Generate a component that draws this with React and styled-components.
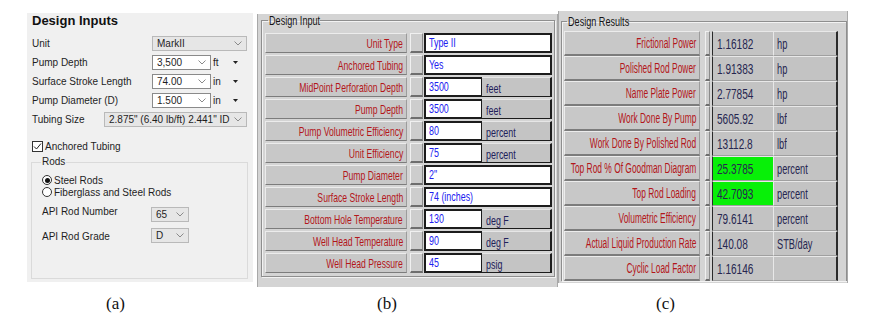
import styled, { createGlobalStyle } from 'styled-components';

const GlobalStyle = createGlobalStyle`
  html, body {
    margin: 0;
    padding: 0;
    background: #fff;
  }
  body {
    width: 871px;
    height: 320px;
    overflow: hidden;
  }
`;

const Page = styled.div`
  display: grid;
  grid-template-columns: 230px 301px 290px;
  grid-template-rows: 276px auto;
  align-items: start;
  padding: 11px 0 0 27px;
`;

const Caption = styled.div`
  margin: 8px 0 0 ${(p) => p.$offset}px;
  font-family: 'Liberation Serif', 'Times New Roman', serif;
  font-size: 17px;
  line-height: 18px;
  color: #111;
`;

/* the old grid panels use a condensed face; none is installed, so squeeze it */
const Narrow = styled.span`
  display: inline-block;
  flex-shrink: 0;
  white-space: nowrap;
  transform: scaleX(${(p) => p.$x});
  transform-origin: ${(p) => p.$origin || 'left'} center;
`;

/* ---------- (a) Design Inputs ---------- */

const InputsPanel = styled.section`
  margin-top: 2px;
  width: 226px;
  height: 269px;
  box-sizing: border-box;
  padding: 0 6px 0 5px;
  background: #f0f0f0;
  font-family: 'Liberation Sans', Arial, sans-serif;
  font-size: 10px;
  color: #1e1e1e;
`;

const PanelTitle = styled.h2`
  margin: 0;
  font-size: 13px;
  line-height: 16px;
  font-weight: bold;
  color: #111;
`;

const FormRow = styled.div`
  display: flex;
  align-items: center;
  height: 19px;
  &:first-of-type {
    margin-top: 5px;
  }
`;

const FieldLabel = styled.span`
  flex: 1;
  white-space: nowrap;
`;

const DropBox = styled.div`
  width: ${(p) => p.$w}px;
  height: 15px;
  box-sizing: border-box;
  display: flex;
  align-items: center;
  justify-content: space-between;
  padding: 0 4px 0 4px;
  background: ${(p) => (p.$flat ? '#e6e6e6' : '#fff')};
  border: 1px solid ${(p) => (p.$flat ? '#b9b9b9' : '#8a8a8a')};
  font-size: 10px;
  white-space: nowrap;
`;

const UnitPick = styled.div`
  width: 36px;
  display: flex;
  align-items: center;
  padding-left: 2px;
  box-sizing: border-box;
  & svg {
    margin: 0 9px 0 auto;
  }
`;

const CheckRow = styled.label`
  display: flex;
  align-items: center;
  gap: 2px;
  height: 19px;
  margin-top: 8px;
`;

const CheckBox = styled.span`
  width: 11px;
  height: 11px;
  box-sizing: border-box;
  border: 1px solid #333;
  background: #fff;
  display: flex;
  align-items: center;
  justify-content: center;
`;

const RodsGroup = styled.fieldset`
  margin: 0 -1px 0 -1px;
  padding: 0 0 0 10px;
  height: 123px;
  box-sizing: border-box;
  border: 1px solid #dadada;
`;

const RodsLegend = styled.legend`
  margin-left: -1px;
  padding: 0 1px;
  line-height: 12px;
`;

const RadioRow = styled.div`
  display: flex;
  align-items: center;
  gap: 2px;
  height: 12px;
  &:first-of-type {
    margin-top: 6px;
  }
`;

const Radio = styled.span`
  width: 10px;
  height: 10px;
  box-sizing: border-box;
  border-radius: 50%;
  border: 1px solid #333;
  background: #fff;
  display: flex;
  align-items: center;
  justify-content: center;
  &::after {
    content: '';
    width: 5px;
    height: 5px;
    border-radius: 50%;
    background: ${(p) => (p.$on ? '#111' : 'transparent')};
  }
`;

const RodRow = styled.div`
  display: flex;
  align-items: flex-start;
  height: 15px;
  margin-top: ${(p) => p.$gap}px;
`;

const RodLabel = styled.span`
  width: 109px;
  line-height: 10px;
  margin-top: ${(p) => p.$nudge}px;
`;

const Chevron = () => (
  <svg width="8" height="5" viewBox="0 0 8 5">
    <path d="M0.5 0.5 L4 4 L7.5 0.5" stroke="#8a8a8a" fill="none" />
  </svg>
);

const Caret = () => (
  <svg width="5" height="3" viewBox="0 0 5 3">
    <path d="M0 0 H5 L2.5 3 Z" fill="#222" />
  </svg>
);

const unitRows = [
  ['Pump Depth', '3,500', 'ft'],
  ['Surface Stroke Length', '74.00', 'in'],
  ['Pump Diameter (D)', '1.500', 'in'],
];

const DesignInputs = () => (
  <InputsPanel>
    <PanelTitle>Design Inputs</PanelTitle>
    <FormRow>
      <FieldLabel>Unit</FieldLabel>
      <DropBox $w={95} $flat>
        MarkII <Chevron />
      </DropBox>
    </FormRow>
    {unitRows.map(([label, value, unit]) => (
      <FormRow key={label}>
        <FieldLabel>{label}</FieldLabel>
        <DropBox $w={59}>
          {value} <Chevron />
        </DropBox>
        <UnitPick>
          {unit}
          <Caret />
        </UnitPick>
      </FormRow>
    ))}
    <FormRow>
      <FieldLabel>Tubing Size</FieldLabel>
      <DropBox $w={143} $flat>
        2.875" (6.40 lb/ft) 2.441" ID <Chevron />
      </DropBox>
    </FormRow>
    <CheckRow>
      <CheckBox>
        <svg width="9" height="9" viewBox="0 0 9 9">
          <path d="M1 4.5 L3.5 7 L8 1.5" stroke="#222" fill="none" />
        </svg>
      </CheckBox>
      Anchored Tubing
    </CheckRow>
    <RodsGroup>
      <RodsLegend>Rods</RodsLegend>
      <RadioRow>
        <Radio $on />
        Steel Rods
      </RadioRow>
      <RadioRow>
        <Radio />
        Fiberglass and Steel Rods
      </RadioRow>
      <RodRow $gap={9}>
        <RodLabel $nudge={0}>API Rod Number</RodLabel>
        <DropBox $w={38} $flat>
          65 <Chevron />
        </DropBox>
      </RodRow>
      <RodRow $gap={6}>
        <RodLabel $nudge={4}>API Rod Grade</RodLabel>
        <DropBox $w={38} $flat>
          D <Chevron />
        </DropBox>
      </RodRow>
    </RodsGroup>
  </InputsPanel>
);

/* ---------- (b), (c) legacy grid panels ---------- */

const LegacyPanel = styled.section`
  margin-top: ${(p) => p.$top}px;
  width: ${(p) => p.$w}px;
  height: ${(p) => p.$h}px;
  box-sizing: border-box;
  background: #d4d4d4;
  border-left: 1px solid #a8a8a8;
  border-right: 1px solid #a8a8a8;
  padding: ${(p) => p.$pad};
  font-family: 'Liberation Sans', Arial, sans-serif;
  overflow: hidden;
`;

const GroupFrame = styled.fieldset`
  margin: 0;
  padding: ${(p) => p.$pad};
  border: 1px solid #8e8e8e;
  border-bottom: ${(p) => (p.$open ? 'none' : '1px solid #8e8e8e')};
  box-shadow: inset 1px 1px 0 #f2f2f2, 1px 1px 0 #f2f2f2;
`;

const GroupLegend = styled.legend`
  margin-left: 3px;
  padding: 0 1px;
  width: ${(p) => p.$w}px;
  font-size: 13px;
  line-height: 13px;
  color: #141414;
  overflow: visible;
`;

const InputGrid = styled.div`
  display: grid;
  grid-template-columns: 142px 13px 128px;
  grid-auto-rows: 20px;
  column-gap: 2px;
  row-gap: 2px;
  margin-top: 6px;
  & > :nth-child(3n + 2) {
    margin-left: 1px;
    margin-right: -1px;
  }
`;

const LabelCell = styled.div`
  display: flex;
  align-items: center;
  justify-content: flex-end;
  padding-right: 3px;
  background: #c8c8c8;
  border-top: 1px solid #ececec;
  border-left: 1px solid #ececec;
  border-bottom: ${(p) => p.$bottom}px solid #7c7c7c;
  border-right: 1px solid #9c9c9c;
  color: #b3161a;
  font-size: ${(p) => p.$size}px;
`;

const StubButton = styled.div`
  background: #cdcdcd;
  border-top: 1px solid #f0f0f0;
  border-left: 1px solid #f0f0f0;
  border-bottom: 2px solid #6e6e6e;
  border-right: 1px solid #8a8a8a;
`;

const EntryBox = styled.div`
  display: flex;
  font-size: 13.5px;
`;

const EntryValue = styled.div`
  width: ${(p) => (p.$full ? '100%' : '58px')};
  box-sizing: border-box;
  padding: 0 0 0 3px;
  background: #fff;
  color: #2020f0;
  border: 2px solid #1c1c1c;
  border-right-width: ${(p) => (p.$full ? 2 : 1)}px;
`;

const EntryUnit = styled.div`
  flex: 1;
  display: flex;
  align-items: center;
  padding: 2px 0 0 4px;
  background: #c4c4c4;
  color: #20205a;
  border-top: 1px solid #e6e6e6;
  border-bottom: 1px solid #1c1c1c;
  border-right: 2px solid #1c1c1c;
`;

const ResultGrid = styled.div`
  display: grid;
  grid-template-columns: 136px 12px 61px 65px;
  grid-auto-rows: 25px;
  margin-top: 3px;
  & > :nth-child(4n + 2) {
    margin: 0 2px 0 5px;
  }
`;

const ResultCell = styled.div`
  display: flex;
  align-items: center;
  padding-left: ${(p) => (p.$unit ? 3 : 4)}px;
  background: ${(p) => (p.$hot ? '#08f008' : '#c3c3c3')};
  color: #262650;
  font-size: 14px;
  border-top: 1px solid #e8e8e8;
  border-bottom: 1px solid #a0a0a0;
  border-left: ${(p) => (p.$unit ? '1px solid #e8e8e8' : '1px solid #2a2a2a')};
  border-right: ${(p) => (p.$unit ? '2px solid #2a2a2a' : 'none')};
`;

const inputRows = [
  ['Unit Type', 'Type II'],
  ['Anchored Tubing', 'Yes'],
  ['MidPoint Perforation Depth', '3500', 'feet'],
  ['Pump Depth', '3500', 'feet'],
  ['Pump Volumetric Efficiency', '80', 'percent'],
  ['Unit Efficiency', '75', 'percent'],
  ['Pump Diameter', '2"'],
  ['Surface Stroke Length', '74 (inches)'],
  ['Bottom Hole Temperature', '130', 'deg F'],
  ['Well Head Temperature', '90', 'deg F'],
  ['Well Head Pressure', '45', 'psig'],
];

const resultRows = [
  ['Frictional Power', '1.16182', 'hp'],
  ['Polished Rod Power', '1.91383', 'hp'],
  ['Name Plate Power', '2.77854', 'hp'],
  ['Work Done By Pump', '5605.92', 'lbf'],
  ['Work Done By Polished Rod', '13112.8', 'lbf'],
  ['Top Rod % Of Goodman Diagram', '25.3785', 'percent', true],
  ['Top Rod Loading', '42.7093', 'percent', true],
  ['Volumetric Efficiency', '79.6141', 'percent'],
  ['Actual Liquid Production Rate', '140.08', 'STB/day'],
  ['Cyclic Load Factor', '1.16146', ''],
];

const DesignInput = () => (
  <LegacyPanel $top={3} $w={301} $h={273} $pad="0 2px 0 3px">
    <GroupFrame $pad="0 2px 3px 3px">
      <GroupLegend $w={50}>
        <Narrow $x={0.7}>Design Input</Narrow>
      </GroupLegend>
      <InputGrid>
        {inputRows.map(([label, value, unit]) => [
          <LabelCell key={label} $size={13.5} $bottom={1}>
            <Narrow $x={0.64} $origin="right">
              {label}
            </Narrow>
          </LabelCell>,
          <StubButton key={label + '-b'} />,
          <EntryBox key={label + '-v'}>
            <EntryValue $full={!unit}>
              <Narrow $x={0.66}>{value}</Narrow>
            </EntryValue>
            {unit && (
              <EntryUnit>
                <Narrow $x={0.66}>{unit}</Narrow>
              </EntryUnit>
            )}
          </EntryBox>,
        ])}
      </InputGrid>
    </GroupFrame>
  </LegacyPanel>
);

const DesignResults = () => (
  <LegacyPanel $top={0} $w={290} $h={272} $pad="4px 0 0 2px">
    <GroupFrame $pad="0 0 0 2px" $open>
      <GroupLegend $w={56}>
        <Narrow $x={0.7}>Design Results</Narrow>
      </GroupLegend>
      <ResultGrid>
        {resultRows.map(([label, value, unit, hot]) => [
          <LabelCell key={label} $size={14} $bottom={2}>
            <Narrow $x={0.6} $origin="right">
              {label}
            </Narrow>
          </LabelCell>,
          <StubButton key={label + '-b'} />,
          <ResultCell key={label + '-v'} $hot={hot}>
            <Narrow $x={0.72}>{value}</Narrow>
          </ResultCell>,
          <ResultCell key={label + '-u'} $unit>
            <Narrow $x={0.66}>{unit}</Narrow>
          </ResultCell>,
        ])}
      </ResultGrid>
    </GroupFrame>
  </LegacyPanel>
);

export default function App() {
  return (
    <>
      <GlobalStyle />
      <Page>
        <DesignInputs />
        <DesignInput />
        <DesignResults />
        <Caption $offset={79}>(a)</Caption>
        <Caption $offset={120}>(b)</Caption>
        <Caption $offset={98}>(c)</Caption>
      </Page>
    </>
  );
}
